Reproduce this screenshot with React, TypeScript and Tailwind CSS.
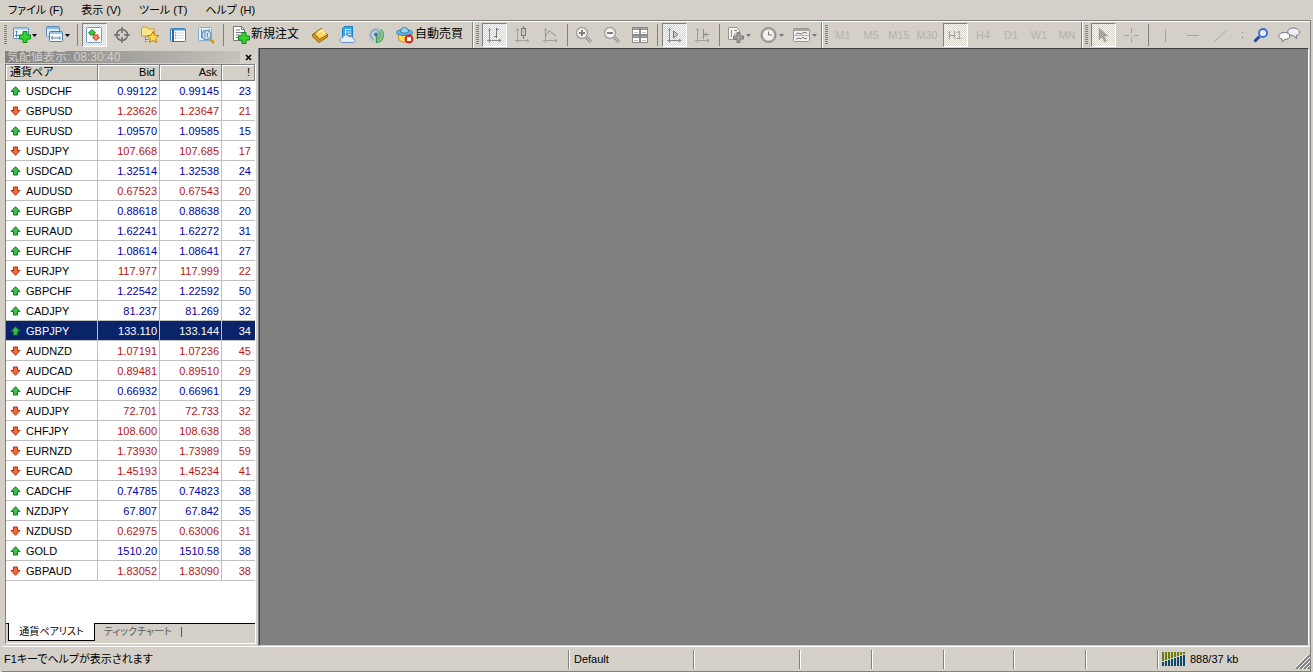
import React, { useState } from 'react';

type Direction = 'up' | 'down';

interface Quote {
  symbol: string;
  bid: string;
  ask: string;
  spread: number;
  dir: Direction;
}

const QUOTES: Quote[] = [
  { symbol: 'USDCHF', bid: '0.99122', ask: '0.99145', spread: 23, dir: 'up' },
  { symbol: 'GBPUSD', bid: '1.23626', ask: '1.23647', spread: 21, dir: 'down' },
  { symbol: 'EURUSD', bid: '1.09570', ask: '1.09585', spread: 15, dir: 'up' },
  { symbol: 'USDJPY', bid: '107.668', ask: '107.685', spread: 17, dir: 'down' },
  { symbol: 'USDCAD', bid: '1.32514', ask: '1.32538', spread: 24, dir: 'up' },
  { symbol: 'AUDUSD', bid: '0.67523', ask: '0.67543', spread: 20, dir: 'down' },
  { symbol: 'EURGBP', bid: '0.88618', ask: '0.88638', spread: 20, dir: 'up' },
  { symbol: 'EURAUD', bid: '1.62241', ask: '1.62272', spread: 31, dir: 'up' },
  { symbol: 'EURCHF', bid: '1.08614', ask: '1.08641', spread: 27, dir: 'up' },
  { symbol: 'EURJPY', bid: '117.977', ask: '117.999', spread: 22, dir: 'down' },
  { symbol: 'GBPCHF', bid: '1.22542', ask: '1.22592', spread: 50, dir: 'up' },
  { symbol: 'CADJPY', bid: '81.237', ask: '81.269', spread: 32, dir: 'up' },
  { symbol: 'GBPJPY', bid: '133.110', ask: '133.144', spread: 34, dir: 'up' },
  { symbol: 'AUDNZD', bid: '1.07191', ask: '1.07236', spread: 45, dir: 'down' },
  { symbol: 'AUDCAD', bid: '0.89481', ask: '0.89510', spread: 29, dir: 'down' },
  { symbol: 'AUDCHF', bid: '0.66932', ask: '0.66961', spread: 29, dir: 'up' },
  { symbol: 'AUDJPY', bid: '72.701', ask: '72.733', spread: 32, dir: 'down' },
  { symbol: 'CHFJPY', bid: '108.600', ask: '108.638', spread: 38, dir: 'down' },
  { symbol: 'EURNZD', bid: '1.73930', ask: '1.73989', spread: 59, dir: 'down' },
  { symbol: 'EURCAD', bid: '1.45193', ask: '1.45234', spread: 41, dir: 'down' },
  { symbol: 'CADCHF', bid: '0.74785', ask: '0.74823', spread: 38, dir: 'up' },
  { symbol: 'NZDJPY', bid: '67.807', ask: '67.842', spread: 35, dir: 'up' },
  { symbol: 'NZDUSD', bid: '0.62975', ask: '0.63006', spread: 31, dir: 'down' },
  { symbol: 'GOLD', bid: '1510.20', ask: '1510.58', spread: 38, dir: 'up' },
  { symbol: 'GBPAUD', bid: '1.83052', ask: '1.83090', spread: 38, dir: 'down' },
];

const MENUS = ['ファイル (F)', '表示 (V)', 'ツール (T)', 'ヘルプ (H)'];
const TIMEFRAMES = ['M1', 'M5', 'M15', 'M30', 'H1', 'H4', 'D1', 'W1', 'MN'];

interface IconProps {
  children: React.ReactNode;
  wide?: boolean;
}

const Icon: React.FC<IconProps> = ({ children, wide }) => (
  <svg
    className="shrink-0"
    width={wide ? 26 : 20}
    height="20"
    viewBox={wide ? '0 0 26 20' : '0 0 20 20'}
    fill="none"
    aria-hidden="true"
  >
    {children}
  </svg>
);

const Caret = ({ color = '#000' }: { color?: string }) => <path d="M20 9h5l-2.500 3z" fill={color} />;

const Plus = ({ x, y }: { x: number; y: number }) => (
  <path
    transform={`translate(${x} ${y})`}
    d="M4 .5h4V4h3.500v4H8v3.500H4V8H.5V4H4z"
    fill="#35d435"
    stroke="#0b8a12"
  />
);

const NewChartIcon = () => (
  <Icon wide>
    <rect x="1.500" y="2.500" width="15" height="11" rx="1" fill="#eef6fd" stroke="#5b8db8" />
    <path d="M2 3.500h14" stroke="#9cc4e4" strokeWidth="2" />
    <path d="M4.500 6v6M3 10.500h9M3.500 7l1-1 1 1" stroke="#5b86ad" />
    <Plus x={7} y={6} />
    <Caret />
  </Icon>
);

const ProfilesIcon = () => (
  <Icon wide>
    <rect x="1.500" y="1.500" width="13" height="10" rx="1" fill="#dcecf8" stroke="#5b8db8" />
    <path d="M2 3h12" stroke="#8ab8de" strokeWidth="2" />
    <rect x="4.500" y="6.500" width="13" height="10" rx="1" fill="#f6fbff" stroke="#4a7eac" />
    <path d="M5 8h12" stroke="#9cc6e8" strokeWidth="2" />
    <path d="M7 13h8M7.500 11l-1 2 1 1.500M14.500 11.500l1 1.500-1 1.500" stroke="#4a7eac" />
    <Caret />
  </Icon>
);

const MarketWatchIcon = () => (
  <Icon>
    <rect x="2.500" y="2.500" width="15" height="15" rx="1" fill="#fff" stroke="#6f9fc8" />
    <path d="M5 6h10M5 9h10M5 12h10M5 15h10" stroke="#d8e4ee" />
    <path d="M8 4.500 11.500 8H10v2H6V8H4.500z" fill="#46c846" stroke="#138a18" />
    <path d="m12 15.500-3.500-3H10v-2.500h4v2.500h1.500z" fill="#ff8a5c" stroke="#d0421c" />
  </Icon>
);

const CrosshairIcon = () => (
  <Icon>
    <circle cx="10" cy="10" r="5.500" stroke="#6d6d6d" strokeWidth="1.500" />
    <path d="M10 2v6M10 12v6M2 10h6M12 10h6" stroke="#6d6d6d" strokeWidth="1.500" />
  </Icon>
);

const NavigatorIcon = () => (
  <Icon>
    <path d="M1.500 3.500 3 2h4l1.500 2h6v7h-13z" fill="#fce58a" stroke="#c09a34" />
    <path d="M5.500 12v5M5.500 14.500h4" stroke="#555" strokeDasharray="1 1" />
    <path
      d="m13 6.500 1.800 3.700 4 .5-3 2.800.8 4-3.600-2-3.600 2 .8-4-3-2.800 4-.5z"
      fill="#ffd84a"
      stroke="#b88414"
    />
  </Icon>
);

const TerminalIcon = () => (
  <Icon>
    <rect x="2.500" y="3.500" width="15" height="13" rx="1" fill="#fff" stroke="#3b78b8" />
    <path d="M3 4.500h14" stroke="#4e95d6" strokeWidth="2" />
    <path d="M5 5v11" stroke="#2c5f9a" strokeWidth="2" />
    <path d="M8 8h8M8 10.500h8M8 13h8" stroke="#c5d9ea" />
    <path d="M7 8h1M7 10.500h1M7 13h1" stroke="#c33" />
  </Icon>
);

const TesterIcon = () => (
  <Icon>
    <rect x="2.500" y="2.500" width="13" height="13" rx="1" fill="#e7f1f9" stroke="#86add0" />
    <path d="M5.500 4v9M5 12h9M8 5v3M13 4v4" stroke="#5a89b5" />
    <path d="m14 14 4 4" stroke="#c99a26" strokeWidth="2.500" />
    <circle cx="10.500" cy="10" r="4.500" fill="#cfe6f6" fillOpacity=".85" stroke="#6d99c0" strokeWidth="1.500" />
    <path d="M9 7v5M11.500 8v4" stroke="#5a89b5" />
  </Icon>
);

const NewOrderIcon = () => (
  <Icon>
    <path d="M2.500 1.500h8l3 3v11h-11z" fill="#fff" stroke="#777" />
    <path d="M10.500 1.500v3h3" stroke="#777" />
    <path d="M5 5h4M5 7.500h6M5 10h5M5 12.500h3" stroke="#777" />
    <Plus x={7} y={7} />
  </Icon>
);

const MetaEditorIcon = () => (
  <Icon>
    <path d="M2.500 9.500 11 3.500l6.500 6V12L9 17.500l-6.500-6z" fill="#d99a1c" stroke="#94660c" />
    <path d="M5.500 8.500 11.500 4l5.500 5.500-7 4.500z" fill="#ffd964" />
    <path d="M8 7.500 12 5l3.500 3.500" stroke="#fff0b0" strokeWidth="1.500" />
    <path d="M2.500 9.500c1.500-1 2.500 0 3 1l4 4 8-5" stroke="#94660c" />
  </Icon>
);

const CloudIcon = () => (
  <Icon>
    <path d="m4.500 3.500 2-2h8v11h-10z" fill="#35a5ec" stroke="#1d7fc4" />
    <path d="M7 4.500h6M8.500 7H13M7.500 4v7M10 9.500h3" stroke="#e8f7ff" />
    <path
      d="M5 17.500c-4 0-4-4.500-.5-4.500C5 9.500 10 9 11 12c2.500-1.500 4.500 0 4 1.800 3 .2 2.500 3.700 0 3.700z"
      fill="#e4edf8"
      stroke="#6a8fc0"
    />
  </Icon>
);

const SignalsIcon = () => (
  <Icon>
    <circle cx="10" cy="10" r="8" fill="#cbd4d6" />
    <path d="M10 18V10l5-6a8 8 0 0 1-5 14z" fill="#93c49a" />
    <path d="M8 17.500A7.500 7.500 0 1 1 14.500 4" stroke="#a9bac6" />
    <path d="M8 14.500A5 5 0 1 1 13 6" stroke="#7f9db8" strokeWidth="1.300" />
    <path d="M12.500 6a5 5 0 0 1-.5 8M15 4.500a7.500 7.500 0 0 1-4 13" stroke="#62aa6c" strokeWidth="1.300" />
    <circle cx="10" cy="9.500" r="2" fill="#3b72b4" />
    <path d="M10.500 11v7" stroke="#3b9a4a" strokeWidth="1.500" />
  </Icon>
);

const AutoTradeIcon = () => (
  <Icon>
    <path d="m3 9 1 6c2 2.500 8 3 11 0l2-6z" fill="#ffdb58" stroke="#c6982a" />
    <ellipse cx="9.500" cy="7.500" rx="8" ry="3" fill="#67b7e2" stroke="#2f7fac" />
    <path d="M5.500 7c0-6 8-6 8 0-2 1.500-6 1.500-8 0z" fill="#96d6f2" stroke="#2f7fac" />
    <circle cx="14" cy="14" r="4.500" fill="#d62f1c" />
    <rect x="12" y="12" width="4" height="4" fill="#fff" />
  </Icon>
);

const BarChartIcon = () => (
  <Icon>
    <path d="M5.500 4v14M3 15.500h14M4 5.500l1.500-2 1.500 2M15 14l2 1.500-2 1.500" stroke="#8c8c88" />
    <path d="M12.500 3v10M10 11.500h2.500M12.500 4.500H15" stroke="#777" />
  </Icon>
);

const CandlesIcon = () => (
  <Icon>
    <path d="M5.500 4v14M3 15.500h14M4 5.500l1.500-2 1.500 2M15 14l2 1.500-2 1.500" stroke="#a3a19b" />
    <path d="M11.500 1v13" stroke="#777" />
    <rect x="9.500" y="3.500" width="4" height="7" fill="#c9c6bf" stroke="#777" />
  </Icon>
);

const LineChartIcon = () => (
  <Icon>
    <path d="M5.500 4v14M3 15.500h14M4 5.500l1.500-2 1.500 2M15 14l2 1.500-2 1.500" stroke="#a3a19b" />
    <path d="M5 12c3-6 5-7 7-4l4 3" stroke="#8c8c88" />
  </Icon>
);

const ZoomIcon = ({ plus }: { plus?: boolean }) => (
  <Icon>
    <path d="m12 12 5 5" stroke="#8d8b87" strokeWidth="3" />
    <path d="m12 12 5 5" stroke="#e4e3e0" />
    <circle cx="8" cy="8" r="5.500" fill="#f4f3f1" stroke="#a5a39e" strokeWidth="1.500" />
    <path d="M5 8h6" stroke="#808080" strokeWidth="2" />
    {plus && <path d="M8 5v6" stroke="#808080" strokeWidth="2" />}
  </Icon>
);

const TileIcon = () => (
  <Icon>
    <path d="M2 2h16v16H2z" fill="#8c8c8c" />
    <path d="M3 5h6v4H3zM11 5h6v4h-6zM3 13h6v4H3zM11 13h6v4h-6z" fill="#fff" />
    <path d="M3 3.500h6M11 3.500h6M3 11.500h6M11 11.500h6" stroke="#a8a8a8" />
    <path d="M4 7.500h4M12 7.500h4M4 15.500h4M12 15.500h4" stroke="#c5c5c5" />
  </Icon>
);

const AutoScrollIcon = () => (
  <Icon>
    <path d="M5.500 4v14M3 15.500h14M4 5.500l1.500-2 1.500 2M15 14l2 1.500-2 1.500" stroke="#8c8c88" />
    <path d="M9.500 6v7l4.500-3.500z" fill="#ccc" stroke="#777" />
  </Icon>
);

const ShiftIcon = () => (
  <Icon>
    <path d="M5.500 4v14M3 15.500h14M4 5.500l1.500-2 1.500 2M15 14l2 1.500-2 1.500" stroke="#a3a19b" />
    <path d="M11.500 4v10M12 9.500h5M14.500 7.500l-2 2 2 2" stroke="#8c8c88" />
  </Icon>
);

const IndicatorsIcon = () => (
  <Icon wide>
    <path d="M2.500 2.500h8l3 3v9h-11z" fill="#f2f1ef" stroke="#9a9893" />
    <path d="M5.500 5v7M8 5.500h3M8 9h3" stroke="#8d8b87" />
    <path d="M11 7.500h3V11h3.500v3H14v3.500h-3V14H7.500v-3H11z" fill="#a5a39f" stroke="#797773" />
    <Caret color="#777" />
  </Icon>
);

const ClockIcon = () => (
  <Icon wide>
    <circle cx="9.500" cy="10" r="7.500" fill="#a9a7a3" stroke="#8a8884" />
    <circle cx="9.500" cy="10" r="5.500" fill="#f3f2f0" />
    <path d="M9.500 6.500V10h3.500" stroke="#777" />
    <Caret color="#777" />
  </Icon>
);

const TemplatesIcon = () => (
  <Icon wide>
    <rect x="1.500" y="3.500" width="16" height="13" rx="1" fill="#f3f2f0" stroke="#9a9893" />
    <path d="M2 5h15" stroke="#a8a6a2" strokeWidth="2" />
    <path d="m4 9 2-1 3 1 3-1.500 3 .5M4 14l3-1 2 1 2-2 2 2 2-1" stroke="#777" />
    <path d="M2 10.500h15" stroke="#b5b3af" />
    <Caret color="#777" />
  </Icon>
);

const CursorIcon = () => (
  <Icon>
    <path d="M6 3v12l3-3 2.500 5 2-1-2.500-5h4z" fill="#a5a39e" stroke="#999" strokeWidth=".5" />
  </Icon>
);

const StrokeIcon = ({ d }: { d: string }) => (
  <Icon>
    <path d={d} stroke="#a5a39e" />
  </Icon>
);

const SearchIcon = () => (
  <Icon>
    <path d="m8.500 11.500-5 5" stroke="#2348a8" strokeWidth="3" />
    <circle cx="12" cy="8" r="4" fill="#e8effa" stroke="#3b6cd4" strokeWidth="1.800" />
  </Icon>
);

const ChatIcon = () => (
  <svg className="shrink-0" width="22" height="20" viewBox="0 0 22 20" aria-hidden="true">
    <path d="M15 3c8 0 8 7 3 7.500l.5 3-3.500-3c-7 0-7-7.500 0-7.500z" fill="#f0eff5" stroke="#77757d" />
    <path d="M6.500 7.500c7 0 7 7 0 7l-2 2.500-.5-3c-5-1-4-6.500 2.500-6.500z" fill="#f8f8fb" stroke="#77757d" />
  </svg>
);

const ArrowIcon = ({ dir }: { dir: Direction }) => (
  <svg width="11" height="10" viewBox="0 0 11 10" aria-hidden="true">
    {dir === 'up' ? (
      <path d="M5.500.7 10 5.500H7.500v3.500h-4V5.500H1z" fill="#35c04a" stroke="#0d7a20" />
    ) : (
      <path d="M5.500 9.300 10 4.500H7.500V1h-4v3.500H1z" fill="#f4693a" stroke="#a8310f" />
    )}
  </svg>
);

interface ToolButtonProps {
  label: string;
  pressed?: boolean;
  wide?: boolean;
  children: React.ReactNode;
}

const ToolButton: React.FC<ToolButtonProps> = ({ label, pressed, wide, children }) => (
  <div className={`flex h-6 shrink-0 justify-center ${wide ? 'w-[33px]' : 'w-7'}`}>
    <button
      type="button"
      aria-label={label}
      aria-pressed={pressed}
      className={`flex h-6 items-center justify-center border ${wide ? 'w-8' : 'w-[25px]'} ${
        pressed
          ? 'border-t-[#808080] border-l-[#808080] border-r-white border-b-white bg-[repeating-conic-gradient(#ffffff_0_25%,#d4d0c8_0_50%)] bg-[length:2px_2px]'
          : 'border-transparent'
      }`}
    >
      {children}
    </button>
  </div>
);

const Separator = () => (
  <div className="flex w-[6px] shrink-0 justify-center">
    <div className="h-[22px] w-px bg-[#808080]" />
  </div>
);

const ToolGroup: React.FC<{ first?: boolean; className?: string; children: React.ReactNode }> = ({
  first,
  className = '',
  children,
}) => (
  <div className={`flex h-[26px] shrink-0 items-center ${className}`}>
    <div className="flex h-full w-2 shrink-0 items-center gap-[2px]">
      <div className={`h-full w-[2px] ${first ? '' : 'border-l border-[#808080] bg-white'}`} />
      <div className="h-5 w-[3px] bg-[repeating-linear-gradient(#808080_0_1px,#d4d0c8_1px_2px)]" />
    </div>
    {children}
  </div>
);

const Toolbar = () => (
  <div className="flex h-[27px] overflow-hidden border-t border-white">
    <ToolGroup first className="w-[472px]">
      <ToolButton label="新規チャート" wide><NewChartIcon /></ToolButton>
      <ToolButton label="プロファイル" wide><ProfilesIcon /></ToolButton>
      <Separator />
      <ToolButton label="気配値表示" pressed><MarketWatchIcon /></ToolButton>
      <ToolButton label="データウィンドウ"><CrosshairIcon /></ToolButton>
      <ToolButton label="ナビゲーター"><NavigatorIcon /></ToolButton>
      <ToolButton label="ターミナル"><TerminalIcon /></ToolButton>
      <ToolButton label="ストラテジーテスター"><TesterIcon /></ToolButton>
      <Separator />
      <button type="button" className="flex w-20 shrink-0 items-center pl-[5px] text-xs whitespace-nowrap">
        <NewOrderIcon />
        <span className="pb-[2px]">新規注文</span>
      </button>
      <ToolButton label="メタエディター"><MetaEditorIcon /></ToolButton>
      <ToolButton label="仮想ホスティング"><CloudIcon /></ToolButton>
      <ToolButton label="シグナル"><SignalsIcon /></ToolButton>
      <button type="button" className="flex shrink-0 items-center pl-[5px] text-xs whitespace-nowrap">
        <AutoTradeIcon />
        <span className="pb-[2px]">自動売買</span>
      </button>
    </ToolGroup>
    <ToolGroup>
      <ToolButton label="バーチャート" pressed><BarChartIcon /></ToolButton>
      <ToolButton label="ローソク足"><CandlesIcon /></ToolButton>
      <ToolButton label="ラインチャート"><LineChartIcon /></ToolButton>
      <Separator />
      <ToolButton label="拡大"><ZoomIcon plus /></ToolButton>
      <ToolButton label="縮小"><ZoomIcon /></ToolButton>
      <ToolButton label="整列"><TileIcon /></ToolButton>
      <Separator />
      <ToolButton label="自動スクロール" pressed><AutoScrollIcon /></ToolButton>
      <ToolButton label="チャートシフト"><ShiftIcon /></ToolButton>
      <Separator />
      <ToolButton label="インディケータ" wide><IndicatorsIcon /></ToolButton>
      <ToolButton label="時間足設定" wide><ClockIcon /></ToolButton>
      <ToolButton label="定型チャート" wide><TemplatesIcon /></ToolButton>
    </ToolGroup>
    <ToolGroup>
      {TIMEFRAMES.map(tf => (
        <ToolButton key={tf} label={tf} pressed={tf === 'H1'}>
          <span className={`text-[11px] ${tf === 'H1' ? 'text-[#9c9a95]' : 'text-[#b4b1aa]'}`}>{tf}</span>
        </ToolButton>
      ))}
    </ToolGroup>
    <ToolGroup>
      <ToolButton label="カーソル" pressed><CursorIcon /></ToolButton>
      <ToolButton label="クロスヘア"><StrokeIcon d="M10.500 3v5M10.500 12v6M3 10.500h5M13 10.500h5" /></ToolButton>
      <Separator />
      <ToolButton label="垂直線"><StrokeIcon d="M10.500 4v13" /></ToolButton>
      <ToolButton label="水平線"><StrokeIcon d="M4 10.500h12" /></ToolButton>
      <ToolButton label="トレンドライン"><StrokeIcon d="M4 16 16 5" /></ToolButton>
      <div className="flex w-3 flex-col items-end gap-1 pr-1">
        <i className="h-px w-px bg-[#808080]" />
        <i className="h-px w-px bg-[#808080]" />
      </div>
      <ToolButton label="検索"><SearchIcon /></ToolButton>
      <ToolButton label="チャット"><ChatIcon /></ToolButton>
    </ToolGroup>
  </div>
);

const HEAD_CELL =
  'border-t border-r border-b border-[#808080] px-1 leading-[15px] font-normal shadow-[inset_1px_1px_0_#ffffff]';

const MarketWatch = () => {
  const [selected, setSelected] = useState('GBPJPY');

  return (
    <section className="flex w-[257px] shrink-0 flex-col border-r border-[#808080] pt-[2px] pr-[2px] pb-[2px] pl-[3px]">
      <div className="flex h-[14px] shrink-0 items-center">
        <h2 className="flex h-3 flex-1 items-center bg-linear-to-r from-[#808080] to-[#c6c2bb] pl-[2px] text-xs whitespace-nowrap text-[#d4d0c8]">
          気配値表示: 08:30:40
        </h2>
        <button type="button" aria-label="閉じる" className="flex w-4 justify-center">
          <svg width="7" height="7" viewBox="0 0 7 7" aria-hidden="true">
            <path d="m1 1 5 5M6 1 1 6" stroke="#000" strokeWidth="1.600" />
          </svg>
        </button>
      </div>
      <div className="flex min-h-0 flex-1 flex-col border-r border-b border-l border-r-white border-b-white border-l-[#808080]">
        <div className="min-h-0 flex-1 overflow-hidden bg-white">
          <table className="w-full table-fixed border-separate border-spacing-0 text-[11px] leading-4">
            <thead className="bg-[#d4d0c8]">
              <tr>
                <th className={`${HEAD_CELL} w-[92px] text-left`}>通貨ペア</th>
                <th className={`${HEAD_CELL} w-[62px] text-right`}>Bid</th>
                <th className={`${HEAD_CELL} w-[62px] text-right`}>Ask</th>
                <th className={`${HEAD_CELL} text-right`}>!</th>
              </tr>
            </thead>
            <tbody>
              {QUOTES.map(q => {
                const active = q.symbol === selected;
                const color = active ? 'text-white' : q.dir === 'up' ? 'text-[#0000a8]' : 'text-[#b81414]';
                const cell = `h-5 border-r border-b border-[#c0c0c0] pr-[2px] text-right ${color}`;
                return (
                  <tr
                    key={q.symbol}
                    onClick={() => setSelected(q.symbol)}
                    className={active ? 'bg-[#0a246a]' : ''}
                  >
                    <td className={`h-5 border-r border-b border-[#c0c0c0] pl-1 ${active ? 'text-white' : 'text-black'}`}>
                      <div className="flex items-center gap-[5px]">
                        <ArrowIcon dir={q.dir} />
                        <span>{q.symbol}</span>
                      </div>
                    </td>
                    <td className={cell}>{q.bid}</td>
                    <td className={cell}>{q.ask}</td>
                    <td className={`h-5 border-b border-[#c0c0c0] pr-1 text-right ${color}`}>{q.spread}</td>
                  </tr>
                );
              })}
            </tbody>
          </table>
        </div>
        {/* Tabs */}
        <div className="flex h-5 shrink-0 text-[10px] whitespace-nowrap">
          <div className="w-[2px] border-t border-black" />
          <button type="button" className="h-[18px] w-[87px] border-r border-b border-l border-black bg-white">
            通貨ペアリスト
          </button>
          <div className="flex flex-1 items-center border-t border-black pb-1 text-[#5c5a55]">
            <button type="button" className="px-[9px]">ティックチャート</button>
            <div className="h-[10px] w-px bg-[#5c5a55]" />
          </div>
        </div>
      </div>
    </section>
  );
};

const StatusCell: React.FC<{ className: string; children?: React.ReactNode }> = ({ className, children }) => (
  <div className={`flex h-[19px] shrink-0 items-center border-l border-[#808080] shadow-[inset_1px_0_0_#ffffff] ${className}`}>
    {children}
  </div>
);

const StatusBar = () => (
  <footer className="flex h-[26px] shrink-0 items-center border-t border-b border-t-white border-b-[#808080] text-[11px] whitespace-nowrap">
    <div className="flex-1 pl-[2px]">F1キーでヘルプが表示されます</div>
    <StatusCell className="w-[125px] pl-[5px]">Default</StatusCell>
    <StatusCell className="w-[106px]" />
    <StatusCell className="w-[72px]" />
    <StatusCell className="w-[72px]" />
    <StatusCell className="w-[70px]" />
    <StatusCell className="w-[72px]" />
    <StatusCell className="w-[72px]" />
    <StatusCell className="w-[153px] gap-1 pl-1">
      <svg width="24" height="14" viewBox="0 0 24 14" aria-hidden="true">
        {[0, 1, 2, 3, 4, 5, 6, 7].map(i => (
          <g key={i}>
            <rect x={i * 3} y="0" width="2" height={9 - i} fill="#6b7d0c" />
            <rect x={i * 3} y={10 - i} width="2" height={4 + i} fill="#0c4a6a" />
          </g>
        ))}
      </svg>
      <span className="flex-1">888/37 kb</span>
      <svg className="self-end" width="15" height="15" viewBox="0 0 15 15" aria-hidden="true">
        <path d="M1 15 15 1M5 15 15 5M9 15l6-6M13 15l2-2" stroke="#808080" strokeWidth="2" />
        <path d="M-1 15 15-1M3 15 15 3M7 15l8-8M11 15l4-4" stroke="#fff" />
      </svg>
    </StatusCell>
  </footer>
);

export default function App() {
  return (
    <div className="flex h-screen flex-col overflow-hidden bg-[#d4d0c8] font-['Liberation_Sans','Noto_Sans_CJK_JP',sans-serif] text-black select-none [font-feature-settings:'palt']">
      <nav className="flex h-5 shrink-0 items-center gap-[18px] pl-2 text-[11px] whitespace-nowrap">
        {MENUS.map(menu => (
          <button key={menu} type="button">{menu}</button>
        ))}
      </nav>
      <div className="mr-[2px] shrink-0 border-t border-r border-[#808080]">
        <Toolbar />
      </div>
      <div className="mr-[2px] flex min-h-0 flex-1 flex-col border-r border-[#808080] pl-[2px]">
        <div className="flex min-h-0 flex-1">
          <MarketWatch />
          <main className="mr-px mb-px min-w-0 flex-1 border-t border-r border-l border-t-[#404040] border-r-white border-l-[#404040] bg-[#808080]" />
        </div>
        <StatusBar />
      </div>
    </div>
  );
}
